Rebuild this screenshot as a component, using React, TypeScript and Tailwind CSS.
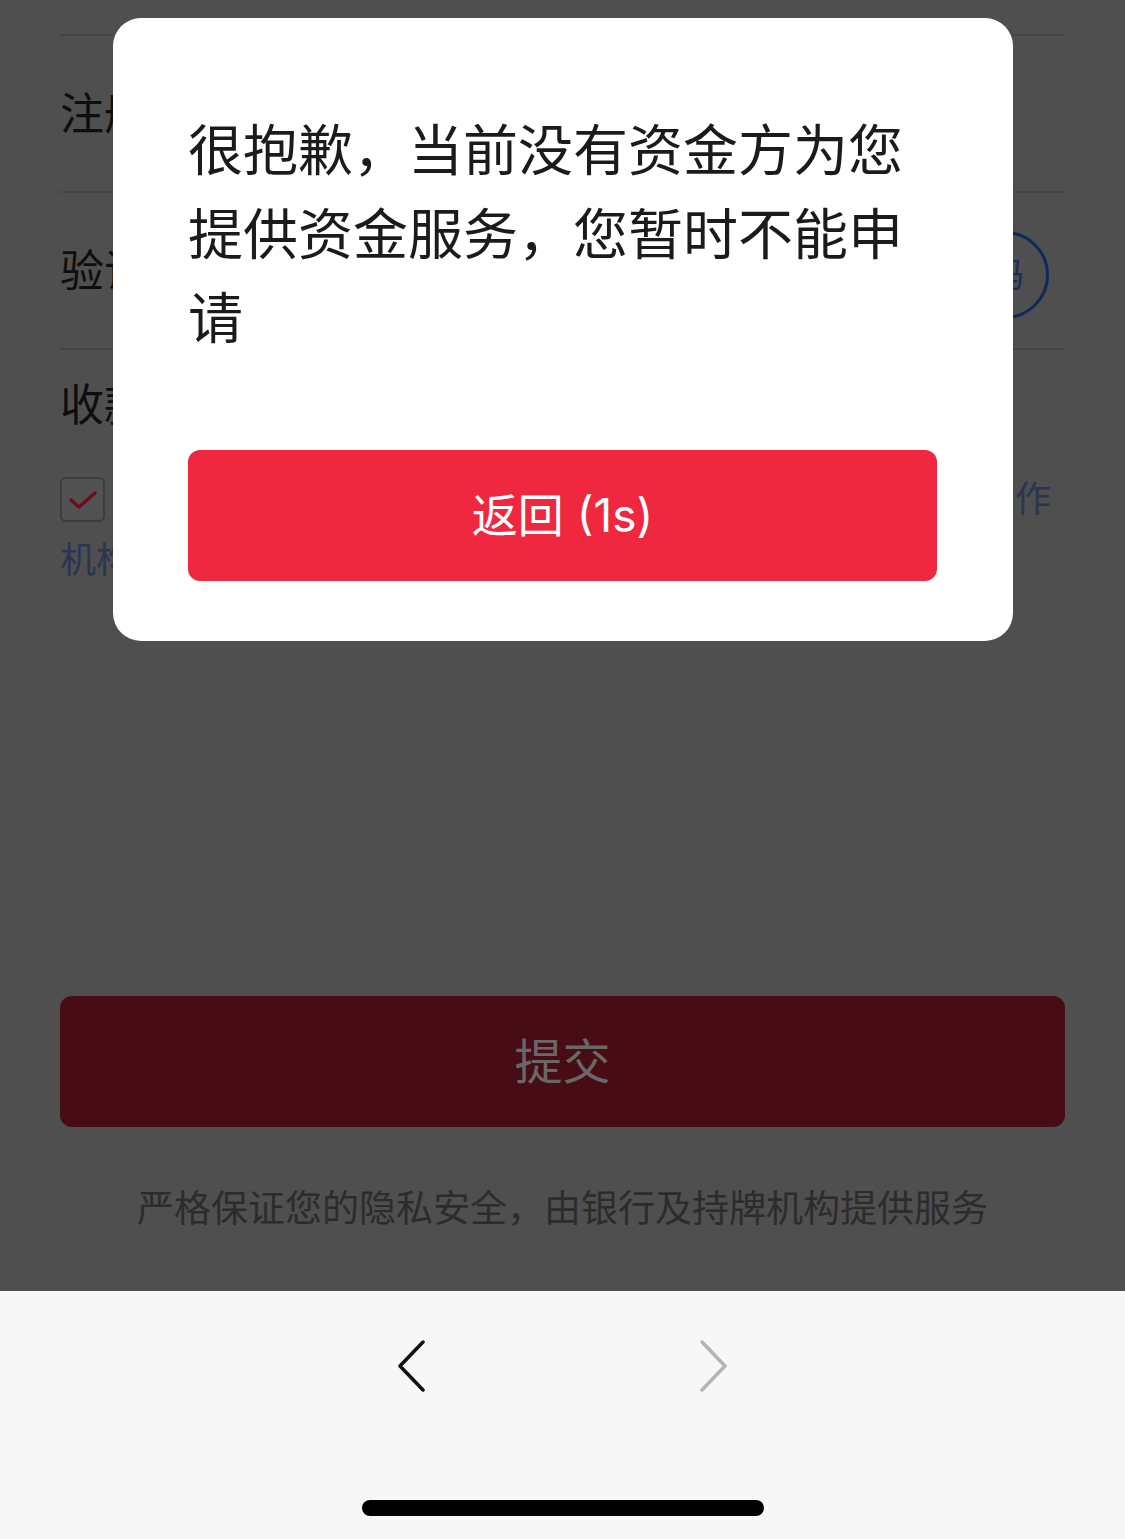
const FONT = "font-['Inter','Noto_Sans_CJK_SC',sans-serif]";

function FormRow({ label, children }: { label: string; children?: React.ReactNode }) {
  return (
    <div className="flex h-[157px] items-center justify-between border-t-2 border-[#464646]">
      <span className="text-[44px] leading-[50px] text-[#0e0e0e]">{label}</span>
      {children}
    </div>
  );
}

function Chevron({ dir, color }: { dir: "left" | "right"; color: string }) {
  return (
    <svg width="30" height="52" viewBox="0 0 30 52" fill="none">
      <path
        d={dir === "left" ? "M27 2 L4 26 L27 50" : "M3 2 L26 26 L3 50"}
        stroke={color}
        strokeWidth="3.5"
        strokeLinecap="round"
        strokeLinejoin="round"
      />
    </svg>
  );
}

export default function App() {
  return (
    <div className={`relative flex h-[1539px] w-[1125px] flex-col overflow-hidden ${FONT}`}>
      {/* dimmed page behind the dialog */}
      <div className="flex h-[1291px] flex-col bg-[#4f4f4f] px-[60px] pt-[34px]">
        <FormRow label="注册手机号" />
        <FormRow label="验证码">
          <div className="mr-[16px] mt-[8px] flex h-[88px] items-center rounded-full border-[3px] border-[#0e2a58] px-[22px] text-[34px] text-[#1d2f55]">
            获取验证码
          </div>
        </FormRow>
        <div className="flex h-[112px] items-center border-t-2 border-[#464646]">
          <span className="text-[44px] leading-[50px] text-[#0e0e0e]">收款银行卡</span>
        </div>

        <div className="mt-[9px] text-[36px] leading-[61px]">
          <div className="flex items-center">
            <span className="flex h-[45px] w-[45px] shrink-0 items-center justify-center rounded-[6px] border-2 border-[#3c3c3c] bg-[#525252]">
              <svg width="30" height="22" viewBox="0 0 30 22" fill="none">
                <path d="M3 11 L11 18 L27 4" stroke="#6e0d19" strokeWidth="3.5" strokeLinecap="round" strokeLinejoin="round" />
              </svg>
            </span>
            <span className="mr-[14px] flex-1 text-right text-[#2a3552]">
              <span className="text-[#262626]">我已阅读并同意</span>《个人信息授权书》，同意提供给合作
            </span>
          </div>
          <div className="text-[#2a3552]">机构</div>
        </div>

        <button className="mt-[405px] flex h-[131px] items-center justify-center rounded-[12px] bg-[#480c14] text-[48px] text-[#686868]">
          提交
        </button>
        <p className="mt-[57px] text-center text-[37px] leading-[50px] text-[#2c2c2c]">
          严格保证您的隐私安全，由银行及持牌机构提供服务
        </p>
      </div>

      {/* browser toolbar */}
      <div className="flex flex-1 flex-col items-center bg-[#f7f7f7]">
        <div className="mt-[49px] flex gap-[273px]">
          <Chevron dir="left" color="#111111" />
          <Chevron dir="right" color="#b4b4b4" />
        </div>
        <div className="mt-[108px] h-[16px] w-[402px] rounded-full bg-black" />
      </div>

      {/* dialog */}
      <div className="absolute left-[113px] top-[18px] w-[900px] rounded-[28px] bg-white pb-[60px] pl-[75px] pr-[76px] pt-[90px]">
        <p className="text-[55px] leading-[84px] text-[#1b1b1b]">
          很抱歉，当前没有资金方为您提供资金服务，您暂时不能申请
        </p>
        <button className="mt-[90px] flex h-[131px] w-full items-center justify-center rounded-[12px] bg-[#f0283f] text-[46px] text-white">
          返回 (1s)
        </button>
      </div>
    </div>
  );
}
